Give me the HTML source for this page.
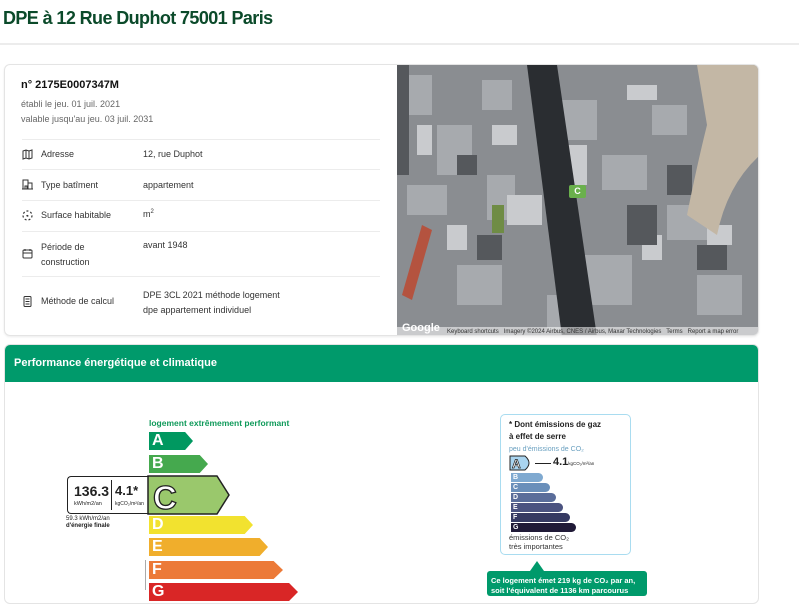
<!DOCTYPE html>
<html><head><meta charset="utf-8"><style>
*{margin:0;padding:0;box-sizing:border-box}
body{width:799px;height:590px;overflow:hidden;background:#fff;font-family:"Liberation Sans",Arial,sans-serif;color:#222;position:relative}
.a{position:absolute}
h1{position:absolute;left:3px;top:8px;font-size:18px;font-weight:bold;color:#0b4a2a;letter-spacing:-0.6px}
.hr{position:absolute;left:0;top:43px;width:799px;height:2px;background:#ececec}
.card{position:absolute;left:4px;top:64px;width:755px;height:272px;border:1px solid #e4e4e4;border-radius:6px;box-shadow:0 1px 2px rgba(0,0,0,.08);overflow:hidden}
.t{font-size:9px;color:#333}
.row{position:absolute;left:17px;width:358px;border-top:1px solid #ececec}
.bar{position:absolute;left:149px;height:18px;color:#fff;font-weight:bold;font-size:16px;padding-left:3px;line-height:18px}
.g{position:absolute;left:511px;height:9px;color:#fff;font-size:7px;font-weight:bold;padding-left:2px;line-height:9px;border-radius:0 5px 5px 0}
.ic{position:absolute;left:17px}
</style></head><body>
<h1>DPE à 12 Rue Duphot 75001 Paris</h1>
<div class="hr"></div>
<div class="card">
 <div class="a" style="left:16px;top:14px;font-size:11px;font-weight:bold;color:#111">n° 2175E0007347M</div>
 <div class="a t" style="left:16px;top:34px;color:#666">établi le jeu. 01 juil. 2021</div>
 <div class="a t" style="left:16px;top:49px;color:#666">valable jusqu'au jeu. 03 juil. 2031</div>
 <div class="row" style="top:74px"></div>
 <div class="row" style="top:104px"></div>
 <div class="row" style="top:135px"></div>
 <div class="row" style="top:166px"></div>
 <div class="row" style="top:211px"></div>
 <svg class="ic" style="top:84px" width="11" height="11" fill="none" stroke="#333" stroke-width="1"><path d="M1,2L4,1L7,2L10,1V9L7,10L4,9L1,10Z M4,1V9 M7,2V10"/></svg>
 <div class="a t" style="left:36px;top:84px">Adresse</div><div class="a t" style="left:138px;top:84px">12, rue Duphot</div>
 <svg class="ic" style="top:114px" width="11" height="11" fill="none" stroke="#333" stroke-width="1"><path d="M1,10V1H6V10 M6,4H10V10 M0,10H11 M3,7V10H5V7Z"/></svg>
 <div class="a t" style="left:36px;top:115px">Type batîment</div><div class="a t" style="left:138px;top:115px">appartement</div>
 <svg class="ic" style="top:145px" width="11" height="11" fill="none" stroke="#333" stroke-width="1.2" stroke-dasharray="2 2"><circle cx="5.5" cy="5.5" r="4.5"/><circle cx="5.5" cy="5.5" r=".6" fill="#333"/></svg>
 <div class="a t" style="left:36px;top:145px">Surface habitable</div><div class="a t" style="left:138px;top:144px">m<sup style="font-size:6px">2</sup></div>
 <svg class="ic" style="top:183px" width="11" height="11" fill="none" stroke="#333" stroke-width="1"><rect x="1" y="2" width="9" height="8" rx="1"/><path d="M1,5H10 M3,1V3 M8,1V3"/></svg>
 <div class="a t" style="left:36px;top:175px;line-height:15px">Période de<br>construction</div><div class="a t" style="left:138px;top:175px">avant 1948</div>
 <svg class="ic" style="top:231px" width="11" height="11" fill="none" stroke="#333" stroke-width="1"><rect x="2" y="0.5" width="7" height="10" rx="1"/><path d="M3.5,3H7.5 M3.5,5.5H7.5 M3.5,8H7.5"/></svg>
 <div class="a t" style="left:36px;top:231px">Méthode de calcul</div><div class="a t" style="left:138px;top:223px;line-height:15px">DPE 3CL 2021 méthode logement<br>dpe appartement individuel</div>
 <div class="a" style="left:392px;top:0;width:363px;height:272px;background:#8a8d91;overflow:hidden">
  <svg class="a" style="left:0;top:0" width="363" height="272">
   <g fill="#a7aaae"><rect x="5" y="10" width="30" height="40"/><rect x="40" y="60" width="35" height="50"/><rect x="85" y="15" width="30" height="30"/><rect x="10" y="120" width="40" height="30"/><rect x="90" y="110" width="28" height="45"/><rect x="60" y="200" width="45" height="40"/><rect x="150" y="35" width="50" height="40"/><rect x="205" y="90" width="45" height="35"/><rect x="255" y="40" width="35" height="30"/><rect x="270" y="140" width="40" height="35"/><rect x="180" y="190" width="55" height="50"/><rect x="300" y="210" width="45" height="40"/><rect x="150" y="230" width="25" height="35"/></g>
   <g fill="#c9cbce"><rect x="20" y="60" width="15" height="30"/><rect x="110" y="130" width="35" height="30"/><rect x="160" y="80" width="30" height="40"/><rect x="230" y="20" width="30" height="15"/><rect x="245" y="170" width="20" height="25"/><rect x="50" y="160" width="20" height="25"/><rect x="95" y="60" width="25" height="20"/><rect x="310" y="160" width="25" height="20"/></g>
   <g fill="#55585c"><rect x="0" y="0" width="12" height="110"/><rect x="230" y="140" width="30" height="40"/><rect x="80" y="170" width="25" height="25"/><rect x="270" y="100" width="25" height="30"/><rect x="300" y="180" width="30" height="25"/><rect x="60" y="90" width="20" height="20"/></g>
   <path d="M300,0H363V90Q330,120 320,170L290,150Q300,100 310,60Z" fill="#c3b7a5"/>
   <path d="M130,0H160L200,272H165Z" fill="#2a2d31"/>
   <path d="M25,160L35,165L15,235L5,230Z" fill="#b4533f"/>
   <rect x="95" y="140" width="12" height="28" fill="#6f8c45"/>
  </svg>
  <div class="a" style="left:172px;top:120px;width:17px;height:13px;background:#6ab04c;color:#fff;font-size:9px;font-weight:bold;text-align:center;line-height:13px;border-radius:2px">C</div>
  <div class="a" style="left:0;top:262px;width:363px;height:10px;background:rgba(255,255,255,.55);font-size:6px;color:#333;padding-left:50px;line-height:10px">Keyboard shortcuts &nbsp; Imagery ©2024 Airbus, CNES / Airbus, Maxar Technologies &nbsp; Terms &nbsp; Report a map error</div>
  <div class="a" style="left:5px;top:257px;font-size:11px;color:#fff;font-weight:bold">Google</div>
 </div>
</div>
<div class="a" style="left:4px;top:344px;width:755px;height:260px;border:1px solid #e4e4e4;border-radius:6px;overflow:hidden">
 <div style="height:37px;background:#009a6b;color:#fff;font-weight:bold;font-size:11px;padding:12px 0 0 9px">Performance énergétique et climatique</div>
</div>
<div class="a" style="left:149px;top:418px;font-size:8.5px;font-weight:bold;color:#0f9a5a">logement extrêmement performant</div>
<div class="bar" style="top:432px;width:44px;background:#009860;clip-path:polygon(0 0,82% 0,100% 50%,82% 100%,0 100%)">A</div>
<div class="bar" style="top:455px;width:59px;background:#45a94e;clip-path:polygon(0 0,86% 0,100% 50%,86% 100%,0 100%)">B</div>
<svg class="a" style="left:147px;top:475px" width="84" height="40"><polygon points="1,1,70,1,82,20,70,39,1,39" fill="#9ac86c" stroke="#222" stroke-width="1.5"/><text x="6" y="34" font-size="33" font-weight="bold" fill="#fff" stroke="#222" stroke-width="1.3" font-family="Liberation Sans">C</text></svg>
<div class="a" style="left:67px;top:476px;width:82px;height:38px;border:1.5px solid #222;border-right:none;border-radius:4px 0 0 4px">
 <div class="a" style="left:6px;top:6px;font-size:14px;font-weight:bold">136.3</div>
 <div class="a" style="left:6px;top:24px;font-size:5.5px">kWh/m2/an</div>
 <div class="a" style="left:43px;top:3px;width:1px;height:30px;background:#222"></div>
 <div class="a" style="left:47px;top:6px;font-size:13px;font-weight:bold">4.1*</div>
 <div class="a" style="left:47px;top:24px;font-size:5px">kgCO₂/m²/an</div>
</div>
<div class="a" style="left:66px;top:516px;font-size:6px;line-height:7px;color:#222">59.3 kWh/m2/an<br><b>d'énergie finale</b></div>
<div class="bar" style="top:516px;width:104px;background:#f2e22f;clip-path:polygon(0 0,92% 0,100% 50%,92% 100%,0 100%)">D</div>
<div class="bar" style="top:538px;width:119px;background:#f0ae2c;clip-path:polygon(0 0,93% 0,100% 50%,93% 100%,0 100%)">E</div>
<div class="bar" style="top:561px;width:134px;background:#ec7a38;clip-path:polygon(0 0,93% 0,100% 50%,93% 100%,0 100%)">F</div>
<div class="bar" style="top:583px;width:149px;background:#d92626;clip-path:polygon(0 0,94% 0,100% 50%,94% 100%,0 100%)">G</div>
<div class="a" style="left:145px;top:560px;width:1px;height:30px;background:#aaa"></div>
<div class="a" style="left:500px;top:414px;width:131px;height:141px;border:1.5px solid #a9dcf0;border-radius:5px"></div>
<div class="a" style="left:509px;top:419px;font-size:8px;font-weight:bold;line-height:12px">* Dont émissions de gaz<br>à effet de serre</div>
<div class="a" style="left:509px;top:446px;font-size:7px;color:#6aa0c0">peu d'émissions de CO₂</div>
<svg class="a" style="left:509px;top:455px" width="26" height="16"><path d="M1,1H16Q24,8 16,15H1Z" fill="#a9d4ef" stroke="#222"/><text x="3" y="13" font-size="12" font-weight="bold" fill="#fff" stroke="#222" stroke-width=".7" font-family="Liberation Sans">A</text></svg>
<div class="a" style="left:535px;top:463px;width:16px;height:1px;background:#222"></div>
<div class="a" style="left:553px;top:456px;font-size:11px;font-weight:bold">4.1<span style="font-size:4.5px;font-weight:normal">kgCO₂/m²/an</span></div>
<div class="g" style="top:473px;width:32px;background:#7fa9d0">B</div>
<div class="g" style="top:483px;width:39px;background:#6a8fba">C</div>
<div class="g" style="top:493px;width:45px;background:#5a6d9a">D</div>
<div class="g" style="top:503px;width:52px;background:#4b5380">E</div>
<div class="g" style="top:513px;width:59px;background:#363a62">F</div>
<div class="g" style="top:523px;width:65px;background:#201a37">G</div>
<div class="a" style="left:509px;top:533px;font-size:7.5px;line-height:9px;color:#333">émissions de CO₂<br>très importantes</div>
<div class="a" style="left:530px;top:561px;width:0;height:0;border-left:7px solid transparent;border-right:7px solid transparent;border-bottom:10px solid #009a6b"></div>
<div class="a" style="left:487px;top:571px;width:160px;height:25px;background:#009a6b;border-radius:3px;color:#fff;font-size:7.5px;font-weight:bold;padding:5px 4px;line-height:10px">Ce logement émet 219 kg de CO₂ par an,<br>soit l'équivalent de 1136 km parcourus</div>
</body></html>
